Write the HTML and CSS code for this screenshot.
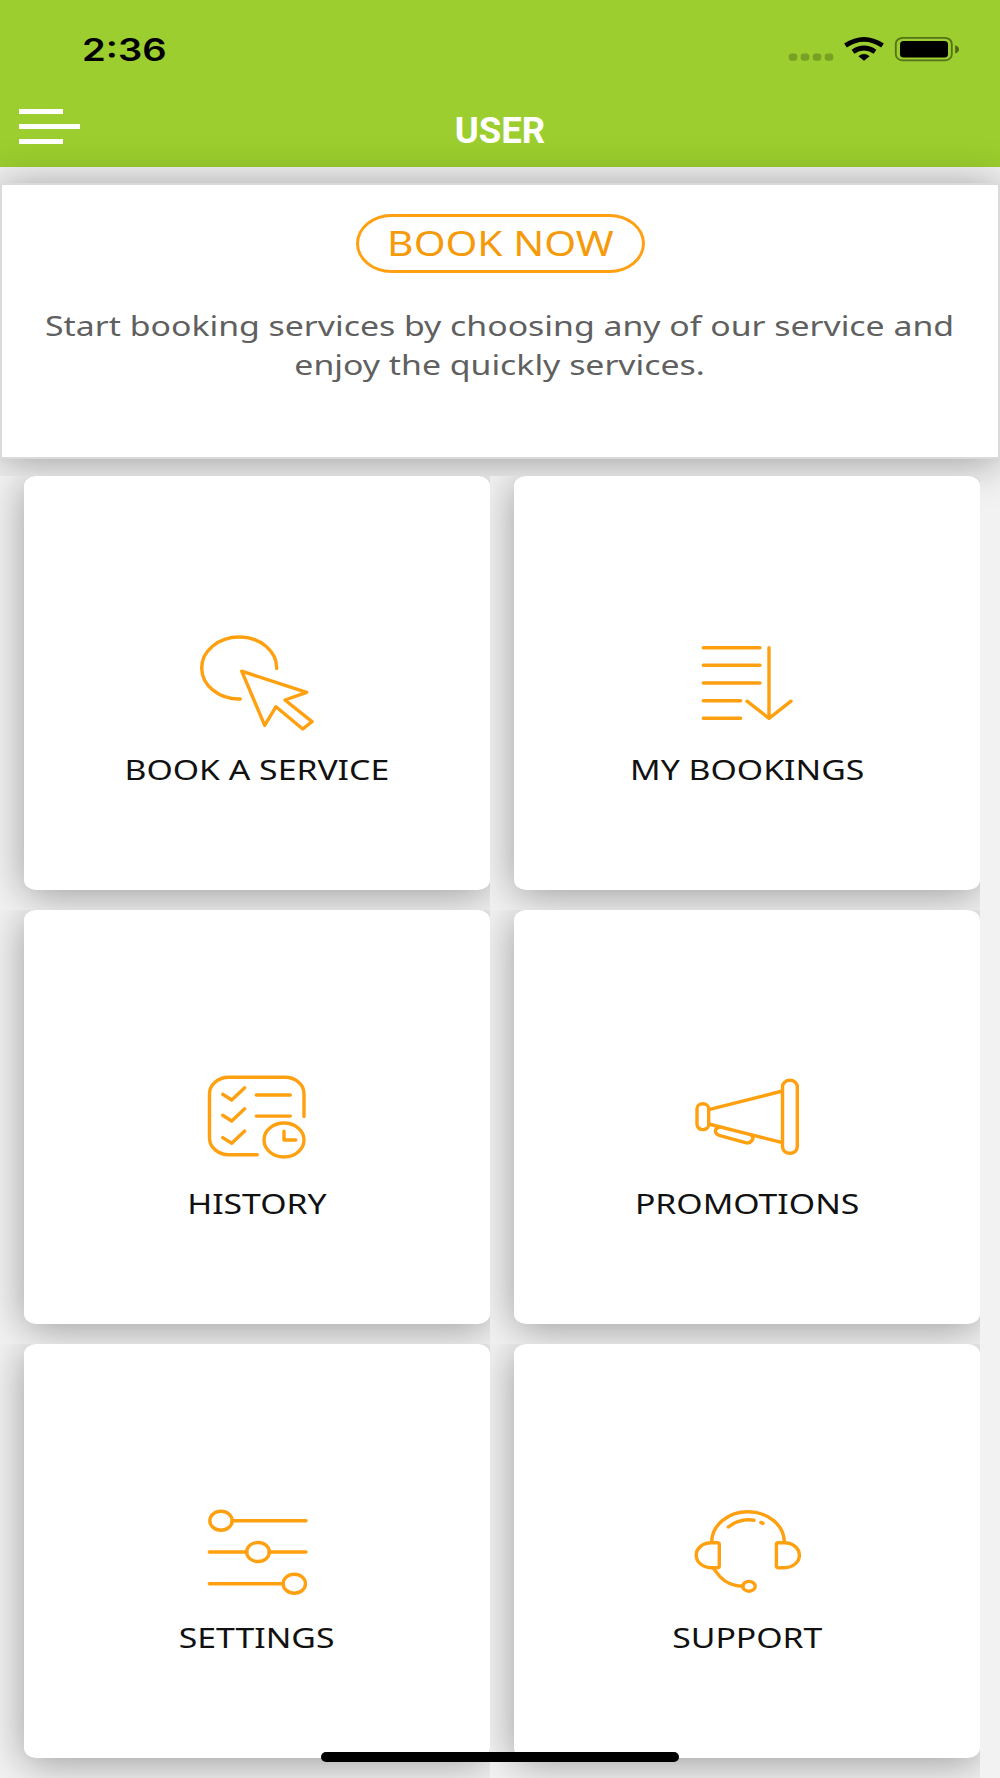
FILE: index.html
```html
<!DOCTYPE html>
<html lang="en">
<head>
  <meta charset="utf-8">
  <title>User</title>
  <link rel="stylesheet" href="styles.css">
</head>
<body>
  <div class="screen">
    <header class="header">
      <div class="status-bar">
        <span class="time">2:36</span>
        <svg class="status-icons" width="172" height="26" viewBox="788 36 172 26">
          <g fill="#000" opacity=".22">
            <rect x="788.7" y="53.5" width="8.6" height="7.2" rx="3"/>
            <rect x="800.7" y="53.5" width="8.6" height="7.2" rx="3"/>
            <rect x="812.7" y="53.5" width="8.6" height="7.2" rx="3"/>
            <rect x="824.7" y="53.5" width="8.6" height="7.2" rx="3"/>
          </g>
          <g fill="none" stroke="#000" stroke-width="4.8">
            <path d="M845.5 45.5Q864 33.2 882.5 45.5"/>
            <path d="M853 51.7Q864 44.3 875 51.7"/>
          </g>
          <path d="M858.4 56.2Q864 52 869.6 56.2L864 60.8Z"/>
          <rect x="895.8" y="37.8" width="56" height="22.6" rx="7" ry="6" fill="none" stroke="#000" stroke-opacity=".45" stroke-width="1.8"/>
          <rect x="900" y="41" width="48" height="16.6" rx="3.5"/>
          <path d="M955.2 45.2Q959 46.5 959 49.2Q959 52 955.2 53.4Z" opacity=".5"/>
        </svg>
      </div>
      <div class="nav-bar">
        <div class="menu">
          <span class="menu-line"></span>
          <span class="menu-line long"></span>
          <span class="menu-line"></span>
        </div>
        <h1 class="title">USER</h1>
      </div>
    </header>

    <section class="intro">
      <button class="book-btn"><span class="wide">BOOK NOW</span></button>
      <p class="intro-text">Start booking services by choosing any of our service and<br>enjoy the quickly services.</p>
    </section>

    <main class="grid">
      <div class="cell">
        <div class="tile">
          <svg class="icon" viewBox="0 0 120 104">
            <path d="M43.3 69A37.5 31 0 1 1 79.7 38.5"/>
            <path d="M44.7 41.2L109.7 62.3L88 70L115 91.7L105.7 99L79 76.7L67.7 95.3Z"/>
          </svg>
          <span class="label">BOOK A SERVICE</span>
        </div>
      </div>
      <div class="cell">
        <div class="tile">
          <svg class="icon" viewBox="0 0 120 104">
            <path d="M16.3 17.7H73M16.3 35.3H73M16.3 53H73M16.3 70.7H53.7M16.3 88.3H53.7"/>
            <path d="M82 17.7V88.3M60 71.2L82 88.3L104 71.2"/>
          </svg>
          <span class="label">MY BOOKINGS</span>
        </div>
      </div>
      <div class="cell">
        <div class="tile">
          <svg class="icon" viewBox="0 0 120 104">
            <path d="M60.3 90.7H32A19.5 16.5 0 0 1 12.5 74.2V30.2A19.5 16.5 0 0 1 32 13.2H88A19 16.5 0 0 1 107 30.2V52.5"/>
            <path d="M25.7 30.3L34.7 36L47.7 23.8M25.7 51.3L34.7 57L47.7 44.8M25.7 73.6L34.7 79.3L47.7 67.1"/>
            <path d="M59.3 31H93.3M59.3 52.1H93.3"/>
            <ellipse cx="87" cy="76" rx="20" ry="17"/>
            <path d="M87 67.3V76H98.7"/>
          </svg>
          <span class="label">HISTORY</span>
        </div>
      </div>
      <div class="cell">
        <div class="tile">
          <svg class="icon" viewBox="0 0 120 104">
            <rect x="95.5" y="16.3" width="14.8" height="73" rx="7.3" ry="6.5"/>
            <rect x="10" y="39.7" width="11.7" height="25.9" rx="5.7" ry="5"/>
            <path d="M21.7 45.7L95.5 27M21.7 60L95.5 78.7"/>
            <path d="M32.5 63.2C27 64.5 27 70 33 71.7L58.5 78.7C64 80 68 74.5 64.5 71"/>
          </svg>
          <span class="label">PROMOTIONS</span>
        </div>
      </div>
      <div class="cell">
        <div class="tile">
          <svg class="icon" viewBox="0 0 120 104">
            <path d="M35 22.7H109M12.3 54H50M72 54H109M12.3 85.7H86"/>
            <ellipse cx="24" cy="22.7" rx="11.2" ry="9.5"/>
            <ellipse cx="61" cy="54" rx="11.4" ry="9.5"/>
            <ellipse cx="97.3" cy="85.7" rx="11.2" ry="9.5"/>
          </svg>
          <span class="label">SETTINGS</span>
        </div>
      </div>
      <div class="cell">
        <div class="tile">
          <svg class="icon" viewBox="0 0 120 104">
            <path d="M24.7 44A36.3 30.2 0 0 1 97.3 44"/>
            <path d="M41.3 29Q52.5 20 67 22.2M73.8 24.4L76 25.4"/>
            <path d="M24.2 44.7H30.3Q32.3 44.7 32.3 46.4V68Q32.3 69.7 30.3 69.7H24.2A15 12.5 0 0 1 24.2 44.7Z"/>
            <path d="M97.4 44.7H91.4Q89.4 44.7 89.4 46.4V68Q89.4 69.7 91.4 69.7H97.4A15 12.5 0 0 0 97.4 44.7Z"/>
            <path d="M26.5 70.5L33.5 79.2Q42 88.3 56 88.3"/>
            <ellipse cx="62" cy="88.3" rx="6.2" ry="4.9"/>
          </svg>
          <span class="label">SUPPORT</span>
        </div>
      </div>
    </main>

    <div class="home-indicator"></div>
  </div>
</body>
</html>
```
FILE: styles.css
```css
* {
  box-sizing: border-box;
}
body {
  margin: 0;
  background: #f2f2f2;
  font-family: "Noto Sans", sans-serif;
}
.screen {
  position: relative;
  width: 1000px;
  height: 1778px;
  overflow: hidden;
}

/* header */
.header {
  height: 167px;
  background: #9bce2e;
}
.status-bar {
  display: flex;
  justify-content: space-between;
  align-items: center;
  height: 98px;
  padding: 0 40px 0 82px;
}
.time {
  font: 600 31px "Inter", sans-serif;
  transform: scaleX(1.23);
  transform-origin: left;
}
.nav-bar {
  display: grid;
  grid-template-columns: 1fr auto 1fr;
  height: 69px;
  padding-left: 19px;
}
.menu {
  display: flex;
  flex-direction: column;
  gap: 10px;
  padding-top: 11px;
}
.menu-line {
  width: 44px;
  height: 5px;
  background: #fff;
}
.menu-line.long {
  width: 61px;
}
.title {
  margin: 11px 19px 0 0;
  color: #fff;
  font: bold 36.5px/43px "Roboto", sans-serif;
}

/* intro card */
.intro {
  display: flex;
  flex-direction: column;
  align-items: center;
  height: 276px;
  margin-top: 16px;
  padding-top: 29px;
  background: #fff;
  border: 2px solid #dadada;
  box-shadow: 0 3px 40px rgba(0, 0, 0, 0.36);
}
.book-btn {
  width: 289px;
  height: 59px;
  padding: 0;
  background: #fff;
  border: 3px solid #ffa012;
  border-radius: 36px / 30px;
  color: #f59b0b;
  font: 34px/51px "Noto Sans", sans-serif;
}
.wide {
  display: inline-block;
  transform: scaleX(1.2);
}
.intro-text {
  margin: 33px 0 0;
  color: #606060;
  font-size: 28px;
  line-height: 39px;
  text-align: center;
  white-space: nowrap;
  transform: scaleX(1.207);
}

/* tiles */
.grid {
  position: relative;
  display: grid;
  grid-template-columns: 490px 490px;
  grid-auto-rows: 434px;
  margin-top: 17px;
}
.cell {
  padding: 0 0 20px 24px;
  background: #f2f2f2;
  overflow: hidden;
}
.tile {
  display: flex;
  flex-direction: column;
  align-items: center;
  height: 100%;
  padding-top: 154px;
  background: #fff;
  border-radius: 12px / 10px;
  box-shadow: 0 5px 40px rgba(0, 0, 0, 0.36);
}
.icon {
  width: 120px;
  height: 104px;
  fill: none;
  stroke: #ffa010;
  stroke-width: 3.4;
  stroke-linecap: round;
  stroke-linejoin: round;
}
.label {
  margin-top: 16px;
  color: #111;
  font-size: 28px;
  line-height: 38px;
  white-space: nowrap;
  transform: scaleX(1.205);
}

.home-indicator {
  position: absolute;
  left: 321px;
  bottom: 16px;
  width: 358px;
  height: 10px;
  background: #000;
  border-radius: 6px;
}
```
